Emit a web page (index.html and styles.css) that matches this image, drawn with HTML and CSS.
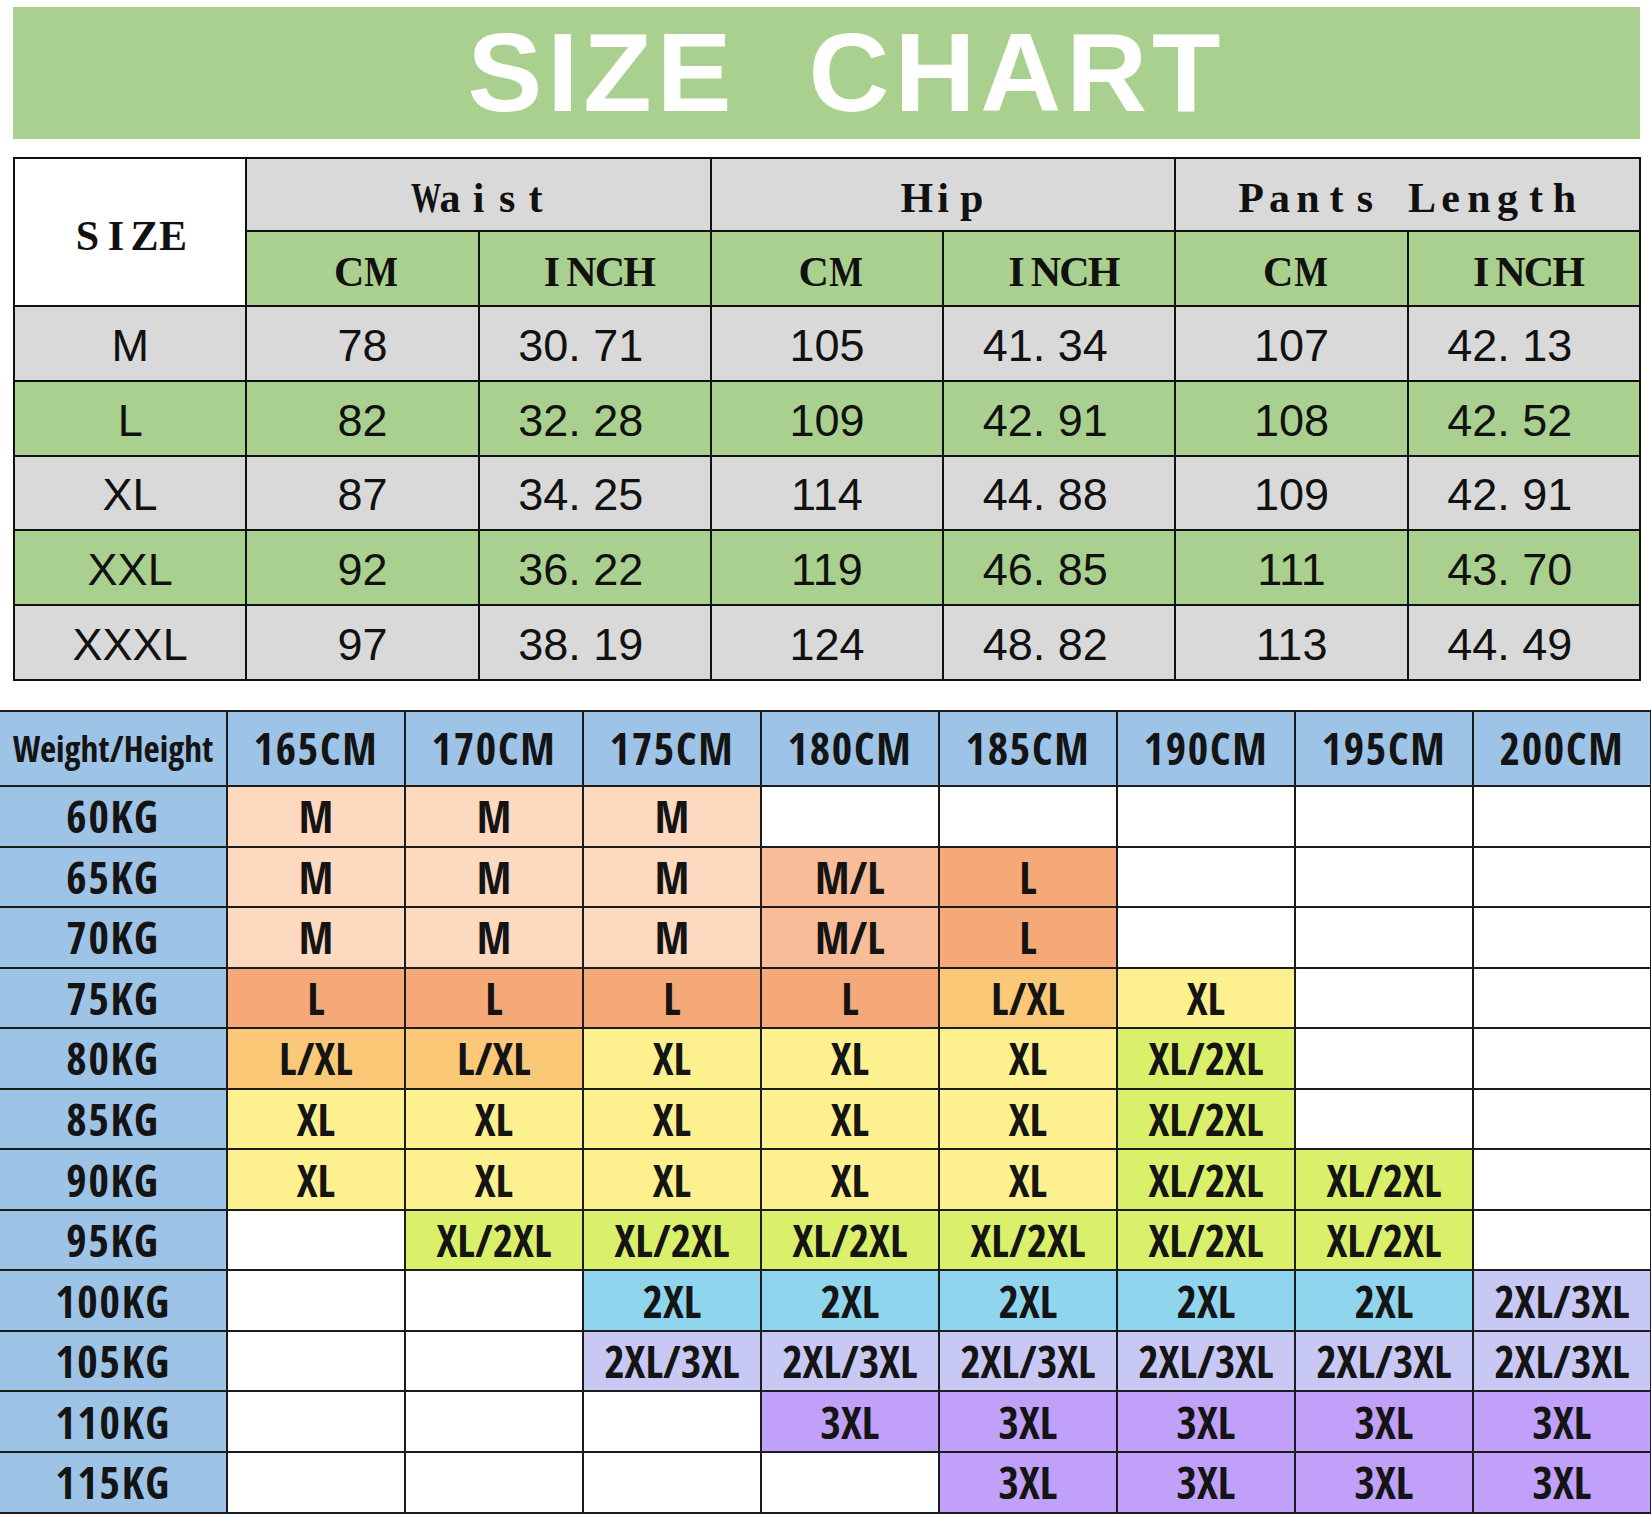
FILE: index.html
```html
<!DOCTYPE html>
<html lang="en">
<head>
<meta charset="utf-8">
<title>Size Chart</title>
<link rel="stylesheet" href="styles.css">
</head>
<body>
<main class="page">
  <header class="banner">
    <h1 class="banner-title">SIZE CHART</h1>
  </header>

  <table class="measure">
    <tr class="hd1">
      <th rowspan="2" class="size-head"><span class="mono"><span class="c">S</span><span class="c">I</span><span class="c">Z</span><span class="c">E</span></span></th>
      <th colspan="2"><span class="mono"><span class="c sq">W</span><span class="c">a</span><span class="c">i</span><span class="c">s</span><span class="c">t</span></span></th>
      <th colspan="2"><span class="mono"><span class="c">H</span><span class="c">i</span><span class="c">p</span></span></th>
      <th colspan="2"><span class="mono"><span class="c">P</span><span class="c">a</span><span class="c">n</span><span class="c">t</span><span class="c">s</span><span class="c"> </span><span class="c">L</span><span class="c">e</span><span class="c">n</span><span class="c">g</span><span class="c">t</span><span class="c">h</span></span></th>
    </tr>
    <tr class="hd2">
      <th><span class="mono"><span class="c">C</span><span class="c sm">M</span></span></th>
      <th class="inch"><span class="mono"><span class="c">I</span><span class="c">N</span><span class="c">C</span><span class="c">H</span></span></th>
      <th><span class="mono"><span class="c">C</span><span class="c sm">M</span></span></th>
      <th class="inch"><span class="mono"><span class="c">I</span><span class="c">N</span><span class="c">C</span><span class="c">H</span></span></th>
      <th><span class="mono"><span class="c">C</span><span class="c sm">M</span></span></th>
      <th class="inch"><span class="mono"><span class="c">I</span><span class="c">N</span><span class="c">C</span><span class="c">H</span></span></th>
    </tr>
    <tr class="row-gray">
      <td>M</td><td>78</td><td class="inch">30. 71</td><td>105</td><td class="inch">41. 34</td><td>107</td><td class="inch">42. 13</td>
    </tr>
    <tr class="row-green">
      <td>L</td><td>82</td><td class="inch">32. 28</td><td>109</td><td class="inch">42. 91</td><td>108</td><td class="inch">42. 52</td>
    </tr>
    <tr class="row-gray">
      <td>XL</td><td>87</td><td class="inch">34. 25</td><td>114</td><td class="inch">44. 88</td><td>109</td><td class="inch">42. 91</td>
    </tr>
    <tr class="row-green">
      <td>XXL</td><td>92</td><td class="inch">36. 22</td><td>119</td><td class="inch">46. 85</td><td>111</td><td class="inch">43. 70</td>
    </tr>
    <tr class="row-gray">
      <td>XXXL</td><td>97</td><td class="inch">38. 19</td><td>124</td><td class="inch">48. 82</td><td>113</td><td class="inch">44. 49</td>
    </tr>
  </table>

  <table class="fit">
    <colgroup>
      <col class="col-w">
      <col span="8" class="col-h">
    </colgroup>
    <tr class="fit-head">
      <th class="corner">Weight/Height</th>
      <th>165CM</th><th>170CM</th><th>175CM</th><th>180CM</th><th>185CM</th><th>190CM</th><th>195CM</th><th>200CM</th>
    </tr>
    <tr>
      <th>60KG</th>
      <td class="s-m">M</td><td class="s-m">M</td><td class="s-m">M</td><td></td><td></td><td></td><td></td><td></td>
    </tr>
    <tr>
      <th>65KG</th>
      <td class="s-m">M</td><td class="s-m">M</td><td class="s-m">M</td><td class="s-ml">M/L</td><td class="s-l">L</td><td></td><td></td><td></td>
    </tr>
    <tr>
      <th>70KG</th>
      <td class="s-m">M</td><td class="s-m">M</td><td class="s-m">M</td><td class="s-ml">M/L</td><td class="s-l">L</td><td></td><td></td><td></td>
    </tr>
    <tr>
      <th>75KG</th>
      <td class="s-l">L</td><td class="s-l">L</td><td class="s-l">L</td><td class="s-l">L</td><td class="s-lxl">L/XL</td><td class="s-xl">XL</td><td></td><td></td>
    </tr>
    <tr>
      <th>80KG</th>
      <td class="s-lxl">L/XL</td><td class="s-lxl">L/XL</td><td class="s-xl">XL</td><td class="s-xl">XL</td><td class="s-xl">XL</td><td class="s-x2">XL/2XL</td><td></td><td></td>
    </tr>
    <tr>
      <th>85KG</th>
      <td class="s-xl">XL</td><td class="s-xl">XL</td><td class="s-xl">XL</td><td class="s-xl">XL</td><td class="s-xl">XL</td><td class="s-x2">XL/2XL</td><td></td><td></td>
    </tr>
    <tr>
      <th>90KG</th>
      <td class="s-xl">XL</td><td class="s-xl">XL</td><td class="s-xl">XL</td><td class="s-xl">XL</td><td class="s-xl">XL</td><td class="s-x2">XL/2XL</td><td class="s-x2">XL/2XL</td><td></td>
    </tr>
    <tr>
      <th>95KG</th>
      <td></td><td class="s-x2">XL/2XL</td><td class="s-x2">XL/2XL</td><td class="s-x2">XL/2XL</td><td class="s-x2">XL/2XL</td><td class="s-x2">XL/2XL</td><td class="s-x2">XL/2XL</td><td></td>
    </tr>
    <tr>
      <th>100KG</th>
      <td></td><td></td><td class="s-2xl">2XL</td><td class="s-2xl">2XL</td><td class="s-2xl">2XL</td><td class="s-2xl">2XL</td><td class="s-2xl">2XL</td><td class="s-23">2XL/3XL</td>
    </tr>
    <tr>
      <th>105KG</th>
      <td></td><td></td><td class="s-23">2XL/3XL</td><td class="s-23">2XL/3XL</td><td class="s-23">2XL/3XL</td><td class="s-23">2XL/3XL</td><td class="s-23">2XL/3XL</td><td class="s-23">2XL/3XL</td>
    </tr>
    <tr>
      <th>110KG</th>
      <td></td><td></td><td></td><td class="s-3xl">3XL</td><td class="s-3xl">3XL</td><td class="s-3xl">3XL</td><td class="s-3xl">3XL</td><td class="s-3xl">3XL</td>
    </tr>
    <tr>
      <th>115KG</th>
      <td></td><td></td><td></td><td></td><td class="s-3xl">3XL</td><td class="s-3xl">3XL</td><td class="s-3xl">3XL</td><td class="s-3xl">3XL</td>
    </tr>
  </table>
</main>
</body>
</html>
```

FILE: styles.css
```css
html, body {
  margin: 0;
  padding: 0;
  background: #ffffff;
}

body {
  overflow-x: hidden;
  font-family: "Liberation Sans", Arial, sans-serif;
  color: #111;
}

.page {
  display: flex;
  flex-direction: column;
  padding-top: 7px;
}

/* ---------- banner ---------- */
.banner {
  margin-left: 13px;
  width: 1627px;
  height: 132px;
  background: #a9d08e;
  display: flex;
  align-items: center;
  justify-content: center;
  padding-left: 40px;
  box-sizing: border-box;
}

.banner-title {
  margin: 0;
  font-family: "Liberation Sans", Arial, sans-serif;
  font-weight: 700;
  font-size: 112px;
  line-height: 1;
  letter-spacing: 5px;
  word-spacing: 36px;
  color: #ffffff;
}

/* ---------- measurement table ---------- */
.measure {
  margin-top: 18px;
  margin-left: 13px;
  width: 1628px;
  table-layout: fixed;
  border-collapse: collapse;
  border: 2px solid #111;
}

.measure th,
.measure td {
  border: 2px solid #111;
  padding: 0;
  text-align: center;
  vertical-align: middle;
}

.measure th {
  font-family: "Liberation Serif", "Times New Roman", serif;
  font-weight: 700;
  font-size: 42px;
  line-height: 1;
  padding-top: 7px;
  color: #111;
}

.measure .hd1 {
  height: 73px;
}

.measure .hd1 th {
  background: #d9d9d9;
}

.measure .hd1 th.size-head {
  background: #ffffff;
}

.measure .hd2 {
  height: 75px;
}

.measure .hd2 th {
  background: #a9d08e;
}

.mono {
  display: inline-flex;
}

.mono .c {
  display: inline-block;
  width: 28.5px;
  text-align: center;
  white-space: pre;
}

.mono .sq {
  transform: scaleX(0.72);
}

.mono .sm {
  transform: scaleX(0.85);
}

.measure td {
  font-family: "Liberation Sans", Arial, sans-serif;
  font-size: 45px;
  font-weight: 400;
  line-height: 1;
  padding-top: 4px;
  white-space: pre;
}

.measure td.inch {
  padding-right: 28px;
}

.measure .row-gray,
.measure .row-green {
  height: 74.8px;
}

.measure .row-gray td {
  background: #d9d9d9;
}

.measure .row-green td {
  background: #a9d08e;
}

/* ---------- fit table ---------- */
.fit {
  margin-top: 29px;
  width: 1651px;
  table-layout: fixed;
  border-collapse: collapse;
  font-family: "Open Sans Condensed", "Liberation Sans Narrow", "DejaVu Sans Condensed", "Open Sans", sans-serif;
  font-stretch: condensed;
  font-weight: 700;
  color: #141414;
}

.fit .col-w {
  width: 227px;
}

.fit .col-h {
  width: 178px;
}

.fit th,
.fit td {
  border: 2px solid #1c1c1c;
  padding: 0;
  text-align: center;
  vertical-align: middle;
  font-size: 44px;
  font-weight: 700;
  line-height: 1;
  background: #ffffff;
  white-space: nowrap;
}

.fit tr {
  height: 60.55px;
}

.fit tr.fit-head {
  height: 75px;
}

.fit th {
  background: #9dc3e6;
  letter-spacing: 1.8px;
}

.fit th:first-child,
.fit td:first-child {
  border-left: none;
}

.fit th.corner {
  font-size: 35px;
  font-weight: 400;
  letter-spacing: 0;
}

.fit .s-m   { background: #fdd9bf; }
.fit .s-ml  { background: #f8bd98; }
.fit .s-l   { background: #f5a878; }
.fit .s-lxl { background: #fbc878; }
.fit .s-xl  { background: #fdf08f; }
.fit .s-x2  { background: #dbf06a; }
.fit .s-2xl { background: #8fd5ee; }
.fit .s-23  { background: #c8c8f4; }
.fit .s-3xl { background: #c0a0f8; }
```
